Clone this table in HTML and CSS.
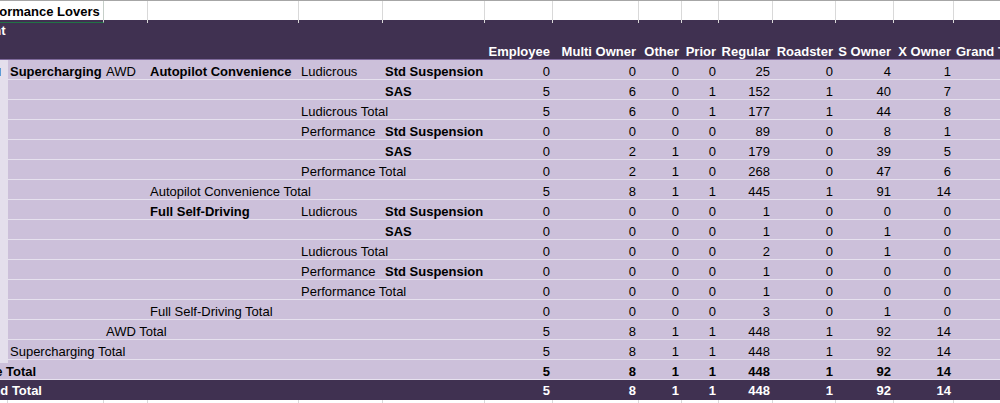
FILE: index.html
```html
<!DOCTYPE html>
<html>
<head>
<meta charset="utf-8">
<link rel="stylesheet" href="styles.css">
</head>
<body>
<div class="viewport">
  <div class="sheet">
    <div class="row top">
      <div class="c title">Performance Lovers</div>
      <div class="c g"></div><div class="c g"></div><div class="c g"></div><div class="c g"></div><div class="c g"></div><div class="c g"></div><div class="c g"></div><div class="c g"></div><div class="c g"></div><div class="c g"></div><div class="c g"></div><div class="c g"></div><div class="c g"></div>
    </div>
    <div class="row head">
      <div class="c cap">Count</div>
      <div class="c"></div><div class="c"></div><div class="c"></div><div class="c"></div><div class="c"></div><div class="c"></div><div class="c"></div><div class="c"></div><div class="c"></div><div class="c"></div><div class="c"></div><div class="c"></div><div class="c"></div><div class="c"></div>
    </div>
    <div class="row head head2">
      <div class="c"></div><div class="c"></div><div class="c"></div><div class="c"></div><div class="c"></div><div class="c"></div>
      <div class="c n">Employee</div><div class="c n">Multi Owner</div><div class="c n">Other</div><div class="c n">Prior</div><div class="c n">Regular</div><div class="c n">Roadster</div><div class="c n">S Owner</div><div class="c n">X Owner</div><div class="c l">Grand Total</div>
    </div>

    <div class="row data">
      <div class="c a"><span class="btn"></span></div><div class="c l b">Supercharging</div><div class="c l">AWD</div><div class="c l b">Autopilot Convenience</div><div class="c l">Ludicrous</div><div class="c l b">Std Suspension</div>
      <div class="c n">0</div><div class="c n">0</div><div class="c n">0</div><div class="c n">0</div><div class="c n">25</div><div class="c n">0</div><div class="c n">4</div><div class="c n">1</div><div class="c"></div>
    </div>
    <div class="row data">
      <div class="c a"></div><div class="c"></div><div class="c"></div><div class="c"></div><div class="c"></div><div class="c l b">SAS</div>
      <div class="c n">5</div><div class="c n">6</div><div class="c n">0</div><div class="c n">1</div><div class="c n">152</div><div class="c n">1</div><div class="c n">40</div><div class="c n">7</div><div class="c"></div>
    </div>
    <div class="row data">
      <div class="c a"></div><div class="c"></div><div class="c"></div><div class="c"></div><div class="c l">Ludicrous Total</div><div class="c"></div>
      <div class="c n">5</div><div class="c n">6</div><div class="c n">0</div><div class="c n">1</div><div class="c n">177</div><div class="c n">1</div><div class="c n">44</div><div class="c n">8</div><div class="c"></div>
    </div>
    <div class="row data">
      <div class="c a"></div><div class="c"></div><div class="c"></div><div class="c"></div><div class="c l">Performance</div><div class="c l b">Std Suspension</div>
      <div class="c n">0</div><div class="c n">0</div><div class="c n">0</div><div class="c n">0</div><div class="c n">89</div><div class="c n">0</div><div class="c n">8</div><div class="c n">1</div><div class="c"></div>
    </div>
    <div class="row data">
      <div class="c a"></div><div class="c"></div><div class="c"></div><div class="c"></div><div class="c"></div><div class="c l b">SAS</div>
      <div class="c n">0</div><div class="c n">2</div><div class="c n">1</div><div class="c n">0</div><div class="c n">179</div><div class="c n">0</div><div class="c n">39</div><div class="c n">5</div><div class="c"></div>
    </div>
    <div class="row data">
      <div class="c a"></div><div class="c"></div><div class="c"></div><div class="c"></div><div class="c l">Performance Total</div><div class="c"></div>
      <div class="c n">0</div><div class="c n">2</div><div class="c n">1</div><div class="c n">0</div><div class="c n">268</div><div class="c n">0</div><div class="c n">47</div><div class="c n">6</div><div class="c"></div>
    </div>
    <div class="row data">
      <div class="c a"></div><div class="c"></div><div class="c"></div><div class="c l">Autopilot Convenience Total</div><div class="c"></div><div class="c"></div>
      <div class="c n">5</div><div class="c n">8</div><div class="c n">1</div><div class="c n">1</div><div class="c n">445</div><div class="c n">1</div><div class="c n">91</div><div class="c n">14</div><div class="c"></div>
    </div>
    <div class="row data">
      <div class="c a"></div><div class="c"></div><div class="c"></div><div class="c l b">Full Self-Driving</div><div class="c l">Ludicrous</div><div class="c l b">Std Suspension</div>
      <div class="c n">0</div><div class="c n">0</div><div class="c n">0</div><div class="c n">0</div><div class="c n">1</div><div class="c n">0</div><div class="c n">0</div><div class="c n">0</div><div class="c"></div>
    </div>
    <div class="row data">
      <div class="c a"></div><div class="c"></div><div class="c"></div><div class="c"></div><div class="c"></div><div class="c l b">SAS</div>
      <div class="c n">0</div><div class="c n">0</div><div class="c n">0</div><div class="c n">0</div><div class="c n">1</div><div class="c n">0</div><div class="c n">1</div><div class="c n">0</div><div class="c"></div>
    </div>
    <div class="row data">
      <div class="c a"></div><div class="c"></div><div class="c"></div><div class="c"></div><div class="c l">Ludicrous Total</div><div class="c"></div>
      <div class="c n">0</div><div class="c n">0</div><div class="c n">0</div><div class="c n">0</div><div class="c n">2</div><div class="c n">0</div><div class="c n">1</div><div class="c n">0</div><div class="c"></div>
    </div>
    <div class="row data">
      <div class="c a"></div><div class="c"></div><div class="c"></div><div class="c"></div><div class="c l">Performance</div><div class="c l b">Std Suspension</div>
      <div class="c n">0</div><div class="c n">0</div><div class="c n">0</div><div class="c n">0</div><div class="c n">1</div><div class="c n">0</div><div class="c n">0</div><div class="c n">0</div><div class="c"></div>
    </div>
    <div class="row data">
      <div class="c a"></div><div class="c"></div><div class="c"></div><div class="c"></div><div class="c l">Performance Total</div><div class="c"></div>
      <div class="c n">0</div><div class="c n">0</div><div class="c n">0</div><div class="c n">0</div><div class="c n">1</div><div class="c n">0</div><div class="c n">0</div><div class="c n">0</div><div class="c"></div>
    </div>
    <div class="row data">
      <div class="c a"></div><div class="c"></div><div class="c"></div><div class="c l">Full Self-Driving Total</div><div class="c"></div><div class="c"></div>
      <div class="c n">0</div><div class="c n">0</div><div class="c n">0</div><div class="c n">0</div><div class="c n">3</div><div class="c n">0</div><div class="c n">1</div><div class="c n">0</div><div class="c"></div>
    </div>
    <div class="row data">
      <div class="c a"></div><div class="c"></div><div class="c l">AWD Total</div><div class="c"></div><div class="c"></div><div class="c"></div>
      <div class="c n">5</div><div class="c n">8</div><div class="c n">1</div><div class="c n">1</div><div class="c n">448</div><div class="c n">1</div><div class="c n">92</div><div class="c n">14</div><div class="c"></div>
    </div>
    <div class="row data">
      <div class="c a"></div><div class="c l">Supercharging Total</div><div class="c"></div><div class="c"></div><div class="c"></div><div class="c"></div>
      <div class="c n">5</div><div class="c n">8</div><div class="c n">1</div><div class="c n">1</div><div class="c n">448</div><div class="c n">1</div><div class="c n">92</div><div class="c n">14</div><div class="c"></div>
    </div>
    <div class="row data subtotal">
      <div class="c l">None Total</div><div class="c"></div><div class="c"></div><div class="c"></div><div class="c"></div><div class="c"></div>
      <div class="c n">5</div><div class="c n">8</div><div class="c n">1</div><div class="c n">1</div><div class="c n">448</div><div class="c n">1</div><div class="c n">92</div><div class="c n">14</div><div class="c"></div>
    </div>
    <div class="row grand">
      <div class="c l">Grand Total</div><div class="c"></div><div class="c"></div><div class="c"></div><div class="c"></div><div class="c"></div>
      <div class="c n">5</div><div class="c n">8</div><div class="c n">1</div><div class="c n">1</div><div class="c n">448</div><div class="c n">1</div><div class="c n">92</div><div class="c n">14</div><div class="c"></div>
    </div>
    <div class="row bottom">
      <div class="c g"></div><div class="c g"></div><div class="c g"></div><div class="c g"></div><div class="c g"></div><div class="c g"></div><div class="c g"></div><div class="c g"></div><div class="c g"></div><div class="c g"></div><div class="c g"></div><div class="c g"></div><div class="c g"></div><div class="c g"></div><div class="c g"></div>
    </div>
  </div>
</div>
</body>
</html>
```

FILE: styles.css
```css
html, body {
  margin: 0;
  padding: 0;
  background: #ffffff;
}

body {
  font-family: "Liberation Sans", Arial, sans-serif;
  font-size: 13px;
  color: #000000;
}

.viewport {
  width: 1000px;
  height: 403px;
  overflow: hidden;
}

.sheet {
  margin-left: -32px;
  width: 1072px;
}

.row {
  display: grid;
  grid-template-columns: 40px 96px 44px 151px 84px 102px 68px 86px 43px 37px 54px 63px 58px 60px 86px;
  box-sizing: border-box;
  height: 20px;
  line-height: 22px;
  white-space: nowrap;
}

.c {
  box-sizing: border-box;
  min-width: 0;
  overflow: visible;
}

.l {
  padding-left: 2px;
}

.n {
  text-align: right;
  padding-right: 3px;
}

.b {
  font-weight: bold;
}

/* first spreadsheet row */
.top {
  background: #ffffff;
  border-top: 1px solid #a6a6a6;
  line-height: 21px;
}

.top .g {
  border-right: 1px solid #d9d9d9;
}

.title {
  grid-column: span 2;
  font-weight: bold;
  padding-left: 6px;
  border-right: 1px solid #c6cfc9;
  border-bottom: 1px solid #217346;
  line-height: 21px;
}

/* pivot header */
.head {
  background: #403151;
  color: #ffffff;
  font-weight: bold;
}

.cap {
  padding-left: 0;
  line-height: 22px;
}

.head2 {
  border-bottom: 1px solid #7f6a9c;
  line-height: 23px;
}

/* data rows */
.data {
  background: #ccc0da;
  border-bottom: 1px solid #e6e1ee;
  line-height: 23px;
}

.data .a {
  background: #e4dfec;
  display: flex;
  justify-content: flex-end;
  align-items: center;
  padding-right: 7px;
}

.btn {
  display: block;
  width: 8px;
  height: 8px;
  box-sizing: border-box;
  border: 1px solid #5b9bd5;
  background: #dbe8f6;
}

.subtotal {
  font-weight: bold;
}

.grand {
  background: #403151;
  color: #ffffff;
  font-weight: bold;
}

.bottom {
  background: #ffffff;
}

.bottom .g {
  border-right: 1px solid #d9d9d9;
}
```
